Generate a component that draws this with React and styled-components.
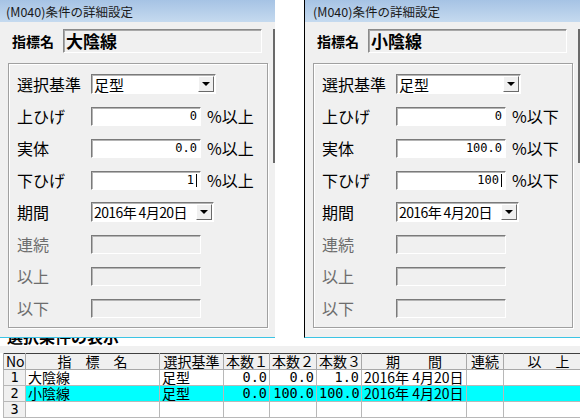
import React from "react";
import styled, { createGlobalStyle } from "styled-components";

const GlobalStyle = createGlobalStyle`
  html, body {
    margin: 0;
    padding: 0;
    background: #ffffff;
  }
  body {
    font-family: "Noto Sans CJK JP", "Liberation Sans", sans-serif;
    color: #000;
  }
`;

const Page = styled.div`
  width: 580px;
  height: 418px;
  overflow: hidden;
  display: flex;
  flex-direction: column;
`;

const TopRow = styled.div`
  display: flex;
  gap: 29px;
`;

const Window = styled.div`
  width: 275px;
  height: 337px;
  flex: none;
  background: #f0f0f0;
  border-bottom: 1px solid #3cc4e4;
  border-left: ${(p) => (p.$edge ? "1px solid #000" : "none")};
  display: flex;
  flex-direction: column;
`;

const TitleBar = styled.div`
  height: 22px;
  flex: none;
  background: linear-gradient(#a6c3e4, #c5daef);
  padding-left: ${(p) => (p.$edge ? "8px" : "6px")};
  font-size: 12.5px;
  line-height: 23px;
  color: #1a1a1a;
  white-space: nowrap;
`;

const Body = styled.div`
  flex: 1;
  display: flex;
`;

const Main = styled.div`
  width: 273px;
  display: flex;
  flex-direction: column;
  padding: 7px 0 0 8px;
  box-sizing: border-box;
`;

const EdgeStrip = styled.div`
  width: 2px;
  height: 134px;
  margin-top: 7px;
  background: #6a6a6a;
`;

const NameRow = styled.div`
  display: flex;
  align-items: center;
  height: 24px;
  padding-left: 4px;
`;

const NameLabel = styled.div`
  width: 51px;
  font-size: 14px;
  font-weight: 700;
`;

const NameField = styled.div`
  width: 199px;
  height: 24px;
  box-sizing: border-box;
  border: 1px solid;
  border-color: #8a8a8a #ffffff #ffffff #8a8a8a;
  box-shadow: inset 1px 1px 0 #a8a8a8;
  padding-left: 2px;
  font-size: 17px;
  font-weight: 700;
  line-height: 22px;
`;

const GroupBox = styled.div`
  margin-top: 10px;
  width: 260px;
  height: 265px;
  box-sizing: border-box;
  border: 1px solid #a0a0a0;
  box-shadow: inset 1px 1px 0 #ffffff, 1px 1px 0 #ffffff;
  padding: 10px 0 0 8px;
  display: flex;
  flex-direction: column;
  gap: 12px;
`;

const Row = styled.div`
  display: flex;
  align-items: center;
  height: 20px;
`;

const Label = styled.div`
  width: 74px;
  font-size: 16px;
  color: ${(p) => (p.$disabled ? "#6d6d6d" : "#000")};
  white-space: nowrap;
`;

const Input = styled.div`
  width: 110px;
  height: 19px;
  box-sizing: border-box;
  border: 1px solid;
  border-color: #7a7a7a #ffffff #ffffff #7a7a7a;
  box-shadow: inset 1px 1px 0 #b4b4b4;
  background: ${(p) => (p.$disabled ? "#f0f0f0" : "#ffffff")};
  display: flex;
  align-items: center;
  justify-content: flex-end;
  padding-right: 3px;
  font-family: "DejaVu Sans Mono", monospace;
  font-size: 12px;
`;

const Caret = styled.span`
  display: inline-block;
  width: 1px;
  height: 13px;
  margin-left: 2px;
  background: #000;
`;

const Unit = styled.div`
  margin-left: 6px;
  font-size: 16px;
  white-space: nowrap;
`;

const Select = styled.div`
  width: ${(p) => p.$w}px;
  height: 20px;
  box-sizing: border-box;
  border: 1px solid;
  border-color: #7a7a7a #ffffff #ffffff #7a7a7a;
  box-shadow: inset 1px 1px 0 #b4b4b4;
  background: #ffffff;
  display: flex;
  align-items: center;
  padding: 0 1px 0 2px;
`;

const SelectText = styled.div`
  flex: 1;
  font-size: ${(p) => p.$size}px;
  letter-spacing: ${(p) => p.$spacing || 0}px;
  white-space: nowrap;
`;

const DropButton = styled.div`
  width: 16px;
  height: 16px;
  box-sizing: border-box;
  border: 1px solid;
  border-color: #ffffff #6a6a6a #6a6a6a #ffffff;
  background: #f0f0f0;
  display: flex;
  align-items: center;
  justify-content: center;

  &::after {
    content: "";
    border-left: 4px solid transparent;
    border-right: 4px solid transparent;
    border-top: 4px solid #000;
  }
`;

const Caption = styled.div`
  height: 16px;
  overflow: hidden;
  background: linear-gradient(#ffffff 8px, #f0f0f0 8px);
`;

const CaptionText = styled.div`
  margin-top: -12px;
  padding-left: 7px;
  font-size: 16px;
  font-weight: 700;
  line-height: 20px;
  white-space: nowrap;
`;

const Grid = styled.table`
  margin-left: 3px;
  border-collapse: collapse;
  table-layout: fixed;
  width: 590px;
  border-top: 1px solid #404040;
  border-left: 1px solid #404040;
  font-size: 14px;
`;

const Th = styled.th`
  height: 15px;
  padding: 0 2px;
  font-weight: 400;
  line-height: 15px;
  background: #f0f0f0;
  border: 1px solid #a8a8a8;
  border-top: none;
  text-align: ${(p) => p.$align || "center"};
  white-space: nowrap;
  overflow: hidden;
`;

const Td = styled.td`
  height: 15px;
  padding: 0 2px;
  line-height: 15px;
  border: 1px solid #b8b8b8;
  background: ${(p) => (p.$head ? "#f0f0f0" : p.$hl ? "#00ffff" : "#ffffff")};
  text-align: ${(p) => p.$align || "left"};
  font-family: ${(p) =>
    p.$num ? '"DejaVu Sans Mono", monospace' : "inherit"};
  font-size: ${(p) => (p.$num ? "13.5px" : "14px")};
  white-space: nowrap;
  overflow: hidden;
`;

const fields = (unit) => [
  { label: "上ひげ", unit },
  { label: "実体", unit },
  { label: "下ひげ", unit, caret: true },
];

const Dialog = ({ edge, name, values, unit }) => (
  <Window $edge={edge}>
    <TitleBar $edge={edge}>(M040)条件の詳細設定</TitleBar>
    <Body>
      <Main>
        <NameRow>
          <NameLabel>指標名</NameLabel>
          <NameField>{name}</NameField>
        </NameRow>
        <GroupBox>
          <Row>
            <Label>選択基準</Label>
            <Select $w={125}>
              <SelectText $size={15}>足型</SelectText>
              <DropButton />
            </Select>
          </Row>
          {fields(unit).map((f, i) => (
            <Row key={f.label}>
              <Label>{f.label}</Label>
              <Input>
                {values[i]}
                {f.caret && <Caret />}
              </Input>
              <Unit>{f.unit}</Unit>
            </Row>
          ))}
          <Row>
            <Label>期間</Label>
            <Select $w={123}>
              <SelectText $size={14} $spacing={-0.6}>
                2016年 4月20日
              </SelectText>
              <DropButton />
            </Select>
          </Row>
          {["連続", "以上", "以下"].map((l) => (
            <Row key={l}>
              <Label $disabled>{l}</Label>
              <Input $disabled />
            </Row>
          ))}
        </GroupBox>
      </Main>
      <EdgeStrip />
    </Body>
  </Window>
);

const rows = [
  { no: "1", name: "大陰線", base: "足型", n1: "0.0", n2: "0.0", n3: "1.0", date: "2016年 4月20日" },
  { no: "2", name: "小陰線", base: "足型", n1: "0.0", n2: "100.0", n3: "100.0", date: "2016年 4月20日", hl: true },
  { no: "3" },
];

export default function App() {
  return (
    <Page>
      <GlobalStyle />
      <TopRow>
        <Dialog name="大陰線" values={["0", "0.0", "1"]} unit="%以上" />
        <Dialog edge name="小陰線" values={["0", "100.0", "100"]} unit="%以下" />
      </TopRow>
      <Caption>
        <CaptionText>選択条件の表示</CaptionText>
      </Caption>
      <Grid>
        <colgroup>
          <col style={{ width: 22 }} />
          <col style={{ width: 134 }} />
          <col style={{ width: 64 }} />
          <col style={{ width: 46 }} />
          <col style={{ width: 47 }} />
          <col style={{ width: 45 }} />
          <col style={{ width: 105 }} />
          <col style={{ width: 37 }} />
          <col style={{ width: 90 }} />
        </colgroup>
        <thead>
          <tr>
            <Th $align="left">No</Th>
            <Th>指　標　名</Th>
            <Th>選択基準</Th>
            <Th>本数１</Th>
            <Th>本数２</Th>
            <Th>本数３</Th>
            <Th>期　　間</Th>
            <Th>連続</Th>
            <Th>以　上</Th>
          </tr>
        </thead>
        <tbody>
          {rows.map((r) => (
            <tr key={r.no}>
              <Td $head $align="center" $num>{r.no}</Td>
              <Td $hl={r.hl}>{r.name}</Td>
              <Td $hl={r.hl}>{r.base}</Td>
              <Td $hl={r.hl} $num $align="right">{r.n1}</Td>
              <Td $hl={r.hl} $num $align="right">{r.n2}</Td>
              <Td $hl={r.hl} $num $align="right">{r.n3}</Td>
              <Td $hl={r.hl}>{r.date}</Td>
              <Td $hl={r.hl} />
              <Td $hl={r.hl} />
            </tr>
          ))}
        </tbody>
      </Grid>
    </Page>
  );
}
